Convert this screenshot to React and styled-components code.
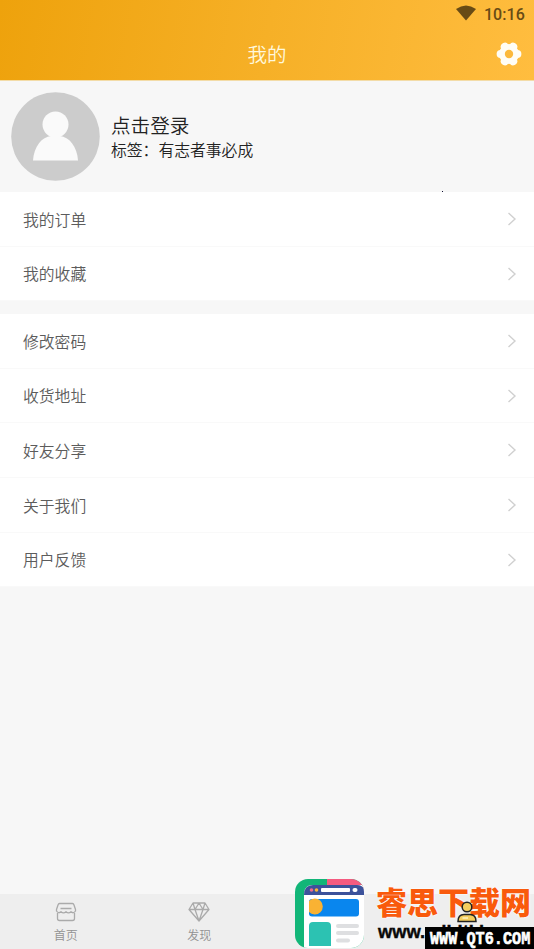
import React from "react";
import styled, { createGlobalStyle } from "styled-components";

const orders = ["我的订单", "我的收藏"];
const settings = ["修改密码", "收货地址", "好友分享", "关于我们", "用户反馈"];

const MenuRow = ({ label }) => (
  <Row>
    <span>{label}</span>
    <svg width="10" height="14" viewBox="0 0 10 14" fill="none">
      <path d="M1.5 1 L8 7 L1.5 13" stroke="#d0d0d0" strokeWidth="1.4" />
    </svg>
  </Row>
);

const App = () => {
  return (
    <Page>
      <GlobalStyle />
      <Header>
        <StatusBar>
          <svg width="20" height="16" viewBox="0 0 20 16">
            <path d="M0 4 Q10 -3 20 4 L10 15.5 Z" fill="#684b15" />
          </svg>
          <span>10:16</span>
        </StatusBar>
        <TitleBar>
          <Title>我的</Title>
          <Gear width="26" height="26" viewBox="-13 -13 26 26">
            <g fill="#fffdf5">
              <circle r="10" />
              {[0, 60, 120, 180, 240, 300].map((deg) => (
                <circle
                  key={deg}
                  cx="8.3"
                  r="4.1"
                  transform={`rotate(${deg})`}
                />
              ))}
            </g>
            <circle r="4.2" fill="#fcb93b" />
          </Gear>
        </TitleBar>
      </Header>

      <Profile>
        <svg width="89" height="89" viewBox="0 0 89 89">
          <circle cx="44.5" cy="44.5" r="44.3" fill="#cccccc" />
          <circle cx="44.5" cy="32.5" r="13" fill="#fafafa" />
          <path
            d="M22 68.5 C23 54 31 45 40 44 H49 C58 45 66 54 67 68.5 Z"
            fill="#fafafa"
          />
        </svg>
        <ProfileText>
          <Name>点击登录</Name>
          <Tagline>标签：有志者事必成</Tagline>
        </ProfileText>
        <Speck />
      </Profile>

      <Group>
        {orders.map((label) => (
          <MenuRow key={label} label={label} />
        ))}
      </Group>
      <Group>
        {settings.map((label) => (
          <MenuRow key={label} label={label} />
        ))}
      </Group>

      <TabBar>
        <Tab>
          <svg
            width="22"
            height="20"
            viewBox="0 0 22 20"
            fill="none"
            stroke="#aaaaaa"
            strokeWidth="1.3"
            strokeLinejoin="round"
          >
            <path d="M4.5 1.5 H17.5 Q18.5 1.5 19 3 L20.5 7.5 V9 Q18.5 12 16 9.8 Q13.5 12 11 9.8 Q8.5 12 6 9.8 Q3.5 12 1.5 9 V7.5 L3 3 Q3.5 1.5 4.5 1.5 Z" />
            <path d="M2.5 11 V16.5 Q2.5 18.5 4.5 18.5 H17.5 Q19.5 18.5 19.5 16.5 V11 M5.5 6.5 H16.5" />
          </svg>
          <span>首页</span>
        </Tab>
        <Tab>
          <svg
            width="22"
            height="20"
            viewBox="0 0 22 20"
            fill="none"
            stroke="#aaaaaa"
            strokeWidth="1.3"
            strokeLinejoin="round"
          >
            <path d="M5 1 H17 L21 7.5 L11 19 L1 7.5 Z M1 7.5 H21 M5 1 L7 7.5 L11 1 L15 7.5 L17 1 M7 7.5 L11 19 L15 7.5" />
          </svg>
          <span>发现</span>
        </Tab>
        <Tab />
        <Tab />
      </TabBar>

      <Watermark>
        <SiteLogo width="70" height="70" viewBox="0 0 70 70">
          <defs>
            <clipPath id="logo">
              <rect width="69" height="69" rx="13" />
            </clipPath>
          </defs>
          <g clipPath="url(#logo)">
            <rect width="70" height="70" fill="#12b678" />
            <path d="M32 0 H70 V12 H32 Z" fill="#f45b80" />
            <path d="M9 15 Q9 6 18 6 H70 V70 H9 Z" fill="#ffffff" />
            <path d="M9 16 Q9 6 18 6 H62 Q70 6 70 16 Z" fill="#3c529b" />
            <circle cx="16.5" cy="11" r="1.8" fill="#ee6a8c" />
            <circle cx="21.5" cy="11" r="1.8" fill="#f8b739" />
            <rect x="26" y="9" width="29" height="4" rx="1" fill="#fff" />
            <rect x="57.5" y="9" width="5" height="4" rx="2" fill="#fff" />
            <rect x="14" y="20" width="50" height="17.5" rx="3" fill="#0986ee" />
            <path d="M14 22 A8 8 0 1 1 14 33 Z" fill="#f9b233" />
            <path d="M14 67 V47 Q14 43 18 43 H32 Q36 43 36 47 V67 Z" fill="#2cc2b2" />
            <g fill="#dedfe1">
              <rect x="41" y="45" width="23" height="4" rx="2" />
              <rect x="41" y="52" width="23" height="4" rx="2" />
              <rect x="41" y="59.5" width="14" height="4" rx="2" />
            </g>
          </g>
        </SiteLogo>
        <SiteText>
          <SiteName>睿思下载网</SiteName>
          <SiteUrl>www.cdbitkk.com</SiteUrl>
        </SiteText>
      </Watermark>
      <Person width="20" height="22" viewBox="0 0 20 22">
        <g fill="#f4ce5e" stroke="#222222" strokeWidth="1.5">
          <circle cx="10" cy="6" r="4.8" />
          <path d="M1 20.5 C1 15.5 3.5 13.5 7 13.5 H13 C16.5 13.5 19 15.5 19 20.5 Z" />
        </g>
        <path d="M5.5 17 H11" stroke="#fff3c0" strokeWidth="1.5" />
      </Person>
      <Stamp>
        <span>WWW.QT6.COM</span>
      </Stamp>
    </Page>
  );
};

export default App;

const GlobalStyle = createGlobalStyle`
  * {
    box-sizing: border-box;
  }

  body {
    margin: 0;
    overflow: hidden;
    font-family: "Noto Sans CJK SC", sans-serif;
    font-weight: 350;
  }
`;

const Page = styled.div`
  position: relative;
  display: flex;
  flex-direction: column;
  width: 534px;
  height: 949px;
  overflow: hidden;
  background: #f7f7f7;
`;

const Header = styled.header`
  height: 80px;
  flex: none;
  background: linear-gradient(100deg, #eea20c 0%, #f6b027 50%, #ffbd3f 100%);
  box-shadow: 0 1px 0 #f3dca8;
`;

const StatusBar = styled.div`
  display: flex;
  justify-content: flex-end;
  align-items: center;
  gap: 8px;
  height: 28px;
  padding: 0 9px 2px 0;
  color: #684b15;
  font: 500 16px Roboto, sans-serif;
  letter-spacing: 0.1px;

  span {
    padding-top: 3px;
  }
`;

const TitleBar = styled.div`
  display: grid;
  grid-template-columns: 1fr auto 1fr;
  align-items: center;
  height: 52px;
  padding-right: 12px;
`;

const Title = styled.h1`
  grid-column: 2;
  margin: 0 -12px 2px 0;
  color: #fff8dc;
  font-size: 19.5px;
  font-weight: 350;
`;

const Gear = styled.svg`
  justify-self: end;
`;

const Profile = styled.section`
  position: relative;
  display: flex;
  gap: 11px;
  height: 112px;
  flex: none;
  padding: 11.5px 11px;
`;

const ProfileText = styled.div`
  padding-top: 19.5px;
  color: #222222;
`;

const Name = styled.div`
  font-size: 19.6px;
  line-height: 28px;
`;

const Tagline = styled.div`
  font-size: 15.8px;
  line-height: 22px;
`;

const Speck = styled.i`
  position: absolute;
  left: 442px;
  bottom: 0;
  width: 1px;
  height: 1px;
  background: #111133;
`;

const Group = styled.section`
  flex: none;
  margin-bottom: 13px;
  background: #ffffff;
`;

const Row = styled.div`
  display: flex;
  justify-content: space-between;
  align-items: center;
  height: 54.6px;
  padding: 0.5px 17px 0 23px;
  border-bottom: 1px solid #f9f9f9;
  color: #5c5c5c;
  font-size: 15.8px;
`;

const TabBar = styled.nav`
  display: flex;
  height: 55px;
  flex: none;
  margin-top: auto;
  background: #eeeeee;
`;

const Tab = styled.div`
  display: flex;
  flex: 1;
  flex-direction: column;
  align-items: center;
  gap: 4px;
  padding: 8px 2px 0 0;
  color: #929292;
  font-size: 12px;
  line-height: 17px;
`;

const Watermark = styled.div`
  position: absolute;
  left: 295px;
  bottom: 0;
  display: flex;
  gap: 11px;
  height: 70px;
`;

const SiteLogo = styled.svg`
  flex: none;
`;

const SiteText = styled.div`
  padding-top: 5px;
  white-space: nowrap;
`;

const SiteName = styled.div`
  color: #f95a0c;
  font-size: 31px;
  font-weight: 900;
  line-height: 34px;
  text-shadow: 0 0 2px #ffffff, 0 0 2px #ffffff;
`;

const SiteUrl = styled.div`
  padding-left: 2px;
  color: #080808;
  font: 700 18.3px/28px "Liberation Sans", sans-serif;
  -webkit-text-stroke: 0.4px #080808;
`;

const Person = styled.svg`
  position: absolute;
  left: 457px;
  top: 901px;
`;

const Stamp = styled.div`
  position: absolute;
  right: 0;
  bottom: 0;
  width: 109px;
  height: 22px;
  padding-left: 5px;
  background: #000000;
  color: #ffffff;
  font: 700 15.2px/24px "Liberation Mono", monospace;
  white-space: nowrap;

  span {
    display: inline-block;
    transform: scaleY(1.25);
    -webkit-text-stroke: 0.5px #ffffff;
  }
`;
